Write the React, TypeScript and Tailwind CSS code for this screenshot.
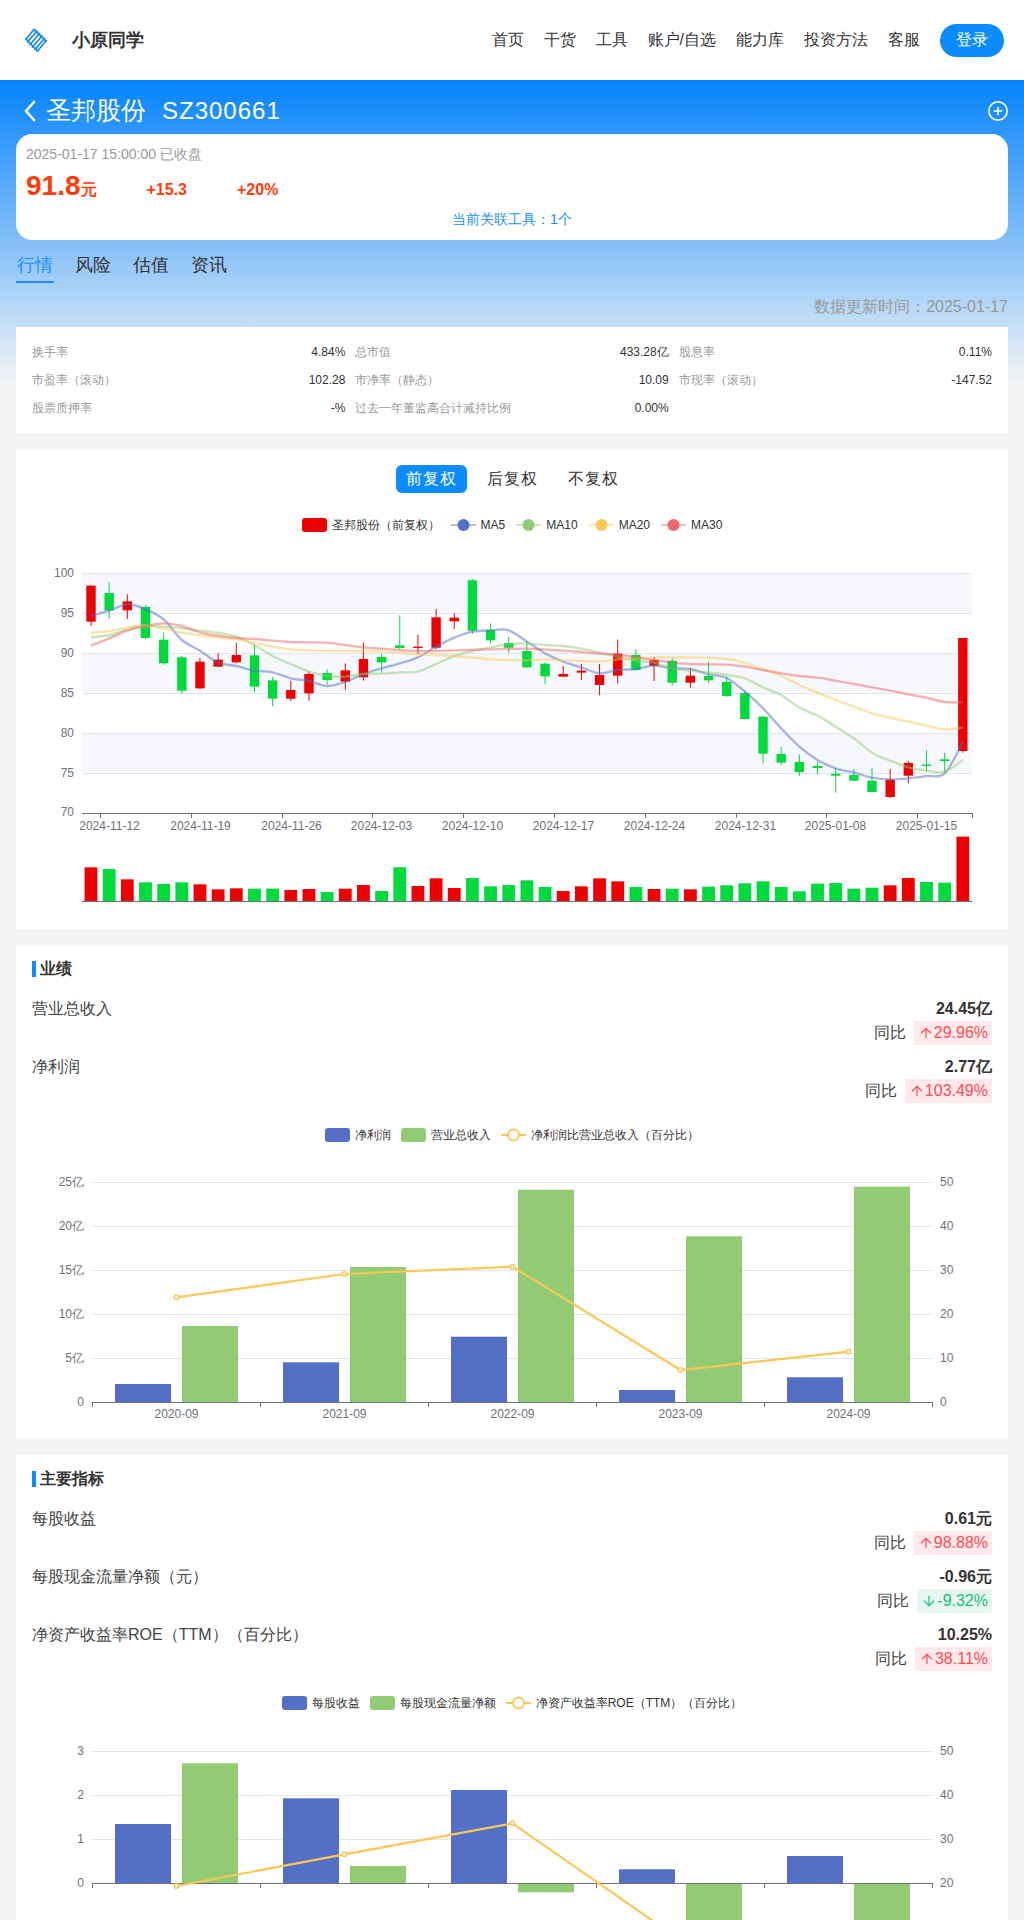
import React from "react";
import { ArrowUp, ArrowDown, CirclePlus } from "lucide-react";

const RED = "#ec0000";
const GREEN = "#00da3c";
const AXIS = "#6e7079";
const GRID = "#e0e6f1";

// [bodyTop, bodyBottom, high, low, isRed, volumeTop]
const K: [number, number, number, number, number, number][] = [
  [107, 215, 105, 228, 1, 952], [129, 181, 97, 207, 0, 957], [154, 181, 133, 207, 1, 988], [171, 264, 165, 268, 0, 997],
  [269, 340, 248, 344, 0, 1002], [322, 422, 317, 431, 0, 997], [335, 415, 324, 417, 1, 1003], [329, 350, 310, 350, 1, 1018],
  [315, 337, 278, 340, 1, 1015], [316, 410, 285, 426, 0, 1016], [391, 446, 381, 468, 0, 1016], [420, 446, 393, 453, 1, 1020],
  [372, 430, 364, 452, 1, 1017], [369, 390, 358, 403, 0, 1026], [361, 395, 340, 419, 1, 1016], [327, 382, 278, 392, 1, 1005],
  [321, 337, 312, 368, 0, 1023], [286, 294, 196, 297, 0, 952], [290, 294, 254, 313, 1, 1008], [202, 293, 177, 298, 1, 985],
  [203, 214, 189, 237, 1, 1014], [91, 242, 87, 251, 0, 984], [240, 271, 220, 280, 0, 1009], [279, 293, 261, 309, 0, 1005],
  [303, 352, 273, 353, 0, 991], [341, 379, 337, 402, 0, 1011], [372, 380, 348, 381, 1, 1023], [362, 368, 342, 390, 1, 1009],
  [375, 405, 342, 436, 1, 985], [311, 377, 268, 400, 1, 994], [315, 360, 297, 362, 0, 1011], [330, 347, 321, 393, 1, 1017],
  [332, 398, 324, 407, 0, 1016], [377, 398, 354, 413, 1, 1018], [378, 391, 335, 399, 0, 1010], [396, 438, 381, 441, 0, 1006],
  [429, 507, 423, 509, 0, 1000], [500, 611, 497, 640, 0, 994], [612, 638, 591, 645, 0, 1011], [636, 666, 613, 678, 0, 1024],
  [648, 654, 636, 673, 0, 1001], [671, 677, 654, 728, 0, 999], [675, 692, 657, 693, 0, 1016], [692, 726, 654, 728, 0, 1013],
  [689, 741, 657, 744, 1, 1006], [639, 677, 633, 701, 1, 984], [644, 648, 601, 665, 0, 996], [628, 633, 609, 668, 0, 998],
  [264, 603, 264, 608, 1, 860],
];

const MA5 = [198, 182, 163, 178, 208, 270, 302, 338, 348, 362, 367, 385, 393, 408, 396, 372, 355, 340, 322, 290, 263, 245, 241, 241, 275, 310, 335, 352, 370, 360, 357, 347, 355, 357, 373, 384, 425, 475, 535, 590, 630, 655, 668, 683, 688, 685, 678, 670, 577];
const MA10 = [262, 255, 238, 228, 230, 235, 242, 248, 260, 285, 318, 342, 365, 378, 380, 372, 371, 367, 365, 342, 318, 303, 292, 282, 281, 285, 288, 296, 308, 320, 332, 338, 355, 362, 367, 375, 385, 412, 435, 473, 497, 530, 565, 608, 632, 652, 662, 665, 630];
const MA20 = [248, 243, 232, 226, 235, 248, 256, 262, 268, 278, 290, 298, 301, 303, 303, 303, 305, 308, 313, 315, 318, 323, 328, 330, 331, 328, 331, 333, 335, 328, 325, 322, 322, 322, 323, 327, 338, 358, 378, 405, 428, 450, 470, 490, 503, 515, 527, 538, 533];
const MA30 = [287, 265, 242, 228, 220, 228, 247, 257, 264, 267, 272, 276, 277, 278, 285, 292, 296, 300, 303, 303, 301, 300, 298, 297, 296, 299, 302, 306, 311, 314, 322, 330, 338, 342, 343, 344, 350, 360, 370, 378, 383, 392, 402, 412, 422, 433, 443, 456, 457];

const cx = (i: number) => 91 + 18.163 * i;
const zy = (z: number) => 550 + z / 3;

function smooth(pts: [number, number][]) {
  let d = `M${pts[0][0]} ${pts[0][1]}`;
  for (let i = 0; i < pts.length - 1; i++) {
    const p0 = pts[Math.max(i - 1, 0)];
    const p1 = pts[i];
    const p2 = pts[i + 1];
    const p3 = pts[Math.min(i + 2, pts.length - 1)];
    d += ` C${p1[0] + (p2[0] - p0[0]) / 6} ${p1[1] + (p2[1] - p0[1]) / 6} ${p2[0] - (p3[0] - p1[0]) / 6} ${p2[1] - (p3[1] - p1[1]) / 6} ${p2[0]} ${p2[1]}`;
  }
  return d;
}

function KChart() {
  const ys = [573.5, 613.5, 653.5, 693.5, 733.5, 773.5];
  const labels = ["100", "95", "90", "85", "80", "75"];
  const dates = ["2024-11-12", "2024-11-19", "2024-11-26", "2024-12-03", "2024-12-10", "2024-12-17", "2024-12-24", "2024-12-31", "2025-01-08", "2025-01-15"];
  const ticks = [100.5, 191.5, 282.5, 372.5, 463.5, 554.5, 645.5, 736.5, 826.5, 917.5, 972.5];
  return (
    <svg width="992" height="389" viewBox="16 540 992 389" fontSize="12">
      {[573.5, 653.5, 733.5].map((y) => (
        <rect key={y} x="82" y={y} width="890" height="40" fill="#f6f8fc" />
      ))}
      {ys.map((y, i) => (
        <g key={y}>
          <line x1="82" x2="972" y1={y} y2={y} stroke={GRID} />
          <text x="74" y={y} textAnchor="end" dominantBaseline="middle" fill={AXIS}>{labels[i]}</text>
        </g>
      ))}
      <text x="74" y="813" textAnchor="end" dominantBaseline="middle" fill={AXIS}>70</text>
      <line x1="82" x2="972.5" y1="813.5" y2="813.5" stroke={AXIS} />
      {ticks.map((x) => (
        <line key={x} x1={x} x2={x} y1="813" y2="818" stroke={AXIS} />
      ))}
      {dates.map((d, i) => (
        <text key={d} x={ticks[i] + 9} y="827" textAnchor="middle" dominantBaseline="middle" fill={AXIS}>{d}</text>
      ))}
      {K.map((k, i) => {
        const c = k[4] ? RED : GREEN;
        const x = cx(i);
        return (
          <g key={i}>
            <line x1={x} x2={x} y1={zy(k[2])} y2={zy(k[3])} stroke={c} />
            <rect x={x - 4.7} y={zy(k[0])} width="9.4" height={(k[1] - k[0]) / 3} fill={c} />
            <rect x={x - 6.4} y={zy(k[5])} width="12.8" height={901 - zy(k[5])} fill={c} />
          </g>
        );
      })}
      {[[MA5, "#5470c6"], [MA10, "#91cc75"], [MA20, "#fac858"], [MA30, "#ee6666"]].map(([arr, color]) => (
        <path
          key={color as string}
          d={smooth((arr as number[]).map((z, i) => [cx(i), zy(z)] as [number, number]))}
          fill="none"
          stroke={color as string}
          strokeWidth="2.4"
          opacity="0.5"
        />
      ))}
      <line x1="82" x2="972.5" y1="901.5" y2="901.5" stroke={AXIS} />
    </svg>
  );
}

type BarChartProps = {
  vb: string;
  h: number;
  zero: number;
  top: number;
  left: string[];
  right: string[];
  blue: number[];
  green: number[];
  line: number[];
  cats?: string[];
};

function BarChart({ vb, h, zero, top, left, right, blue, green, line, cats }: BarChartProps) {
  const step = (zero - top) / (left.length - 1);
  const x0 = 92.5;
  const band = 168;
  return (
    <svg width="992" height={h} viewBox={vb} fontSize="12">
      {left.map((l, i) => {
        const y = Math.floor(zero - step * i) + 0.5;
        return (
          <g key={i}>
            {i > 0 && <line x1={x0} x2={x0 + band * 5} y1={y} y2={y} stroke={GRID} />}
            <text x="84" y={y} textAnchor="end" dominantBaseline="middle" fill={AXIS}>{l}</text>
            <text x="940" y={y} dominantBaseline="middle" fill={AXIS}>{right[i]}</text>
          </g>
        );
      })}
      {blue.map((y, i) => {
        const a = x0 + band * i + 22.5;
        return (
          <g key={i}>
            <rect x={a} y={Math.min(y, zero)} width="56" height={Math.abs(zero - y)} fill="#5470c6" />
            <rect x={a + 67} y={Math.min(green[i], zero)} width="56" height={Math.abs(zero - green[i])} fill="#91cc75" />
          </g>
        );
      })}
      <line x1={x0} x2={x0 + band * 5} y1={zero + 0.5} y2={zero + 0.5} stroke={AXIS} />
      {[0, 1, 2, 3, 4, 5].map((i) => (
        <line key={i} x1={x0 + band * i} x2={x0 + band * i} y1={zero} y2={zero + 5} stroke={AXIS} />
      ))}
      {cats?.map((c, i) => (
        <text key={c} x={x0 + band * i + 84} y={zero + 13} textAnchor="middle" dominantBaseline="middle" fill={AXIS}>{c}</text>
      ))}
      <polyline
        points={line.map((y, i) => `${x0 + band * i + 84},${y}`).join(" ")}
        fill="none"
        stroke="#fac858"
        strokeWidth="2.2"
      />
      {line.map((y, i) => (
        <circle key={i} cx={x0 + band * i + 84} cy={y} r="2.2" fill="#fff" stroke="#fac858" strokeWidth="1.5" />
      ))}
    </svg>
  );
}

type LegendItem = { label: string; kind: "rect" | "dot" | "ring"; color: string };

function Legend({ items, wide }: { items: LegendItem[]; wide?: boolean }) {
  return (
    <div className={wide ? "flex items-center justify-center gap-[11px] text-[12px] leading-[14px] text-[#333]" : "flex items-center justify-center gap-[10px] text-[12px] leading-[14px] text-[#333]"}>
      {items.map((it) => (
        <div key={it.label} className="flex items-center gap-[5px]">
          {it.kind === "rect" ? (
            <span className="block h-[14px] w-[25px] rounded-[3px]" style={{ background: it.color }} />
          ) : (
            <svg width="25" height="14" viewBox="0 0 25 14">
              <line x1="0" x2="25" y1="7" y2="7" stroke={it.color} strokeWidth="2" opacity={it.kind === "dot" ? 0.45 : 1} />
              {it.kind === "dot" ? (
                <circle cx="12.5" cy="7" r="6" fill={it.color} />
              ) : (
                <circle cx="12.5" cy="7" r="5.5" fill="#fff" stroke={it.color} strokeWidth="2" />
              )}
            </svg>
          )}
          <span>{it.label}</span>
        </div>
      ))}
    </div>
  );
}

function SectionTitle({ children }: { children: React.ReactNode }) {
  return (
    <div className="mb-5 flex h-4 items-center gap-1 text-[16px] font-bold text-[#333]">
      <span className="block h-4 w-1 bg-[#0a8cff]" />
      {children}
    </div>
  );
}

function Row({ label, value, pct, up }: { label: string; value: string; pct: string; up: boolean }) {
  return (
    <div className="mb-[10px] flex justify-between text-[16px] leading-6 text-[#444]">
      <div>{label}</div>
      <div className="flex flex-col items-end">
        <div className="font-bold text-[#333]">{value}</div>
        <div className="flex items-center gap-2">
          <span>同比</span>
          <span className={up ? "flex h-6 items-center bg-[#ffe9ea] px-1 text-[#ff4d57]" : "flex h-6 items-center bg-[#e6f7ef] px-1 text-[#17bf78]"}>
            {up ? <ArrowUp size={16} strokeWidth={1.8} /> : <ArrowDown size={16} strokeWidth={1.8} />}
            {pct}
          </span>
        </div>
      </div>
    </div>
  );
}

function Metric({ label, value }: { label: string; value: string }) {
  return (
    <div className="flex h-7 items-center justify-between text-[12px]">
      <span className="text-[#999]">{label}</span>
      <span className="text-[#333]">{value}</span>
    </div>
  );
}

function Logo() {
  return (
    <svg width="24" height="26" viewBox="0 0 24 26" fill="none" stroke="#1a8cf0" strokeWidth="1.8" strokeLinecap="round">
      <path d="M2 12 L10 2.5" />
      <path d="M3.5 15 L13 4" />
      <path d="M6 17.5 L15.5 6.5" />
      <path d="M8.5 20 L18 9" />
      <path d="M11 22.5 L20.5 11.5" />
      <path d="M13.5 24 L22 14" />
      <path d="M2 12 L13.5 24" />
      <path d="M10 2.5 L22 14" />
    </svg>
  );
}

export default function App() {
  return (
    <div className="h-[1920px] w-[1024px] overflow-hidden bg-[#f5f5f5] font-['Liberation_Sans',sans-serif]">
      <header className="flex h-20 items-center justify-between bg-white pl-6 pr-5">
        <div className="flex items-center gap-6">
          <Logo />
          <span className="text-[18px] font-bold text-[#333]">小原同学</span>
        </div>
        <nav className="flex items-center gap-5 text-[16px] text-[#333]">
          <span>首页</span>
          <span>干货</span>
          <span>工具</span>
          <span>账户/自选</span>
          <span>能力库</span>
          <span>投资方法</span>
          <span>客服</span>
          <span className="flex h-[33px] w-16 items-center justify-center rounded-full bg-[#0a8cff] text-white">登录</span>
        </nav>
      </header>

      <main className="bg-[linear-gradient(180deg,#0583fc_0,#f5f5f5_306px)] bg-no-repeat px-4 pb-10">
        <div className="flex h-[54px] items-center justify-between pt-[7px] text-white">
          <div className="flex items-center">
            <svg width="30" height="24" viewBox="0 0 30 24" fill="none" stroke="#fff" strokeWidth="2.6" strokeLinecap="round" strokeLinejoin="round">
              <path d="M18 3 L10 12 L18 21" />
            </svg>
            <span className="text-[25px]">圣邦股份</span>
            <span className="ml-4 text-[24px] tracking-[1px]">SZ300661</span>
          </div>
          <CirclePlus size={22} strokeWidth={1.8} className="-mr-[1px]" />
        </div>

        <section className="h-[106px] rounded-2xl bg-white px-[10px] pt-[10px]">
          <div className="text-[14px] leading-5 text-[#999]">2025-01-17 15:00:00 已收盘</div>
          <div className="mt-[5px] flex h-[34px] items-end font-bold text-[#ff3c0a]">
            <span className="text-[28px] leading-[34px]">91.8</span>
            <span className="text-[16px] leading-[26px]">元</span>
            <span className="ml-[50px] text-[16px] leading-[26px]">+15.3</span>
            <span className="ml-[50px] text-[16px] leading-[26px]">+20%</span>
          </div>
          <div className="mt-[6px] text-center text-[14px] leading-5 text-[#1890ff]">当前关联工具：1个</div>
        </section>

        <div className="mt-[14px] flex h-[29px] gap-5 text-[18px] leading-[22px] text-[#333]">
          <span className="h-[29px] w-[38px] border-b-2 border-[#1890ff] text-center text-[#1890ff]">行情</span>
          <span className="w-[38px] text-center">风险</span>
          <span className="w-[38px] text-center">估值</span>
          <span className="w-[38px] text-center">资讯</span>
        </div>

        <div className="mb-2 mt-3 text-right text-[16px] leading-6 text-[#999]">数据更新时间：2025-01-17</div>

        <section className="h-[106px] bg-white px-4 pt-[11px]">
          <div className="grid grid-cols-3 gap-x-[10px]">
            <Metric label="换手率" value="4.84%" />
            <Metric label="总市值" value="433.28亿" />
            <Metric label="股息率" value="0.11%" />
            <Metric label="市盈率（滚动）" value="102.28" />
            <Metric label="市净率（静态）" value="10.09" />
            <Metric label="市现率（滚动）" value="-147.52" />
            <Metric label="股票质押率" value="-%" />
            <Metric label="过去一年董监高合计减持比例" value="0.00%" />
          </div>
        </section>

        <section className="mt-4 h-[480px] bg-white pt-4">
          <div className="flex h-7 justify-center gap-[10px] text-[16px] leading-7 tracking-[1px] text-[#333]">
            <span className="w-[71px] rounded-md bg-[#0a8cff] text-center text-white">前复权</span>
            <span className="w-[71px] text-center">后复权</span>
            <span className="w-[71px] text-center">不复权</span>
          </div>
          <div className="mb-2 mt-[25px]">
            <Legend
              wide
              items={[
                { label: "圣邦股份（前复权）", kind: "rect", color: RED },
                { label: "MA5", kind: "dot", color: "#5470c6" },
                { label: "MA10", kind: "dot", color: "#91cc75" },
                { label: "MA20", kind: "dot", color: "#fac858" },
                { label: "MA30", kind: "dot", color: "#ee6666" },
              ]}
            />
          </div>
          <KChart />
        </section>

        <section className="mt-4 h-[494px] bg-white pt-4">
          <div className="px-4">
            <SectionTitle>业绩</SectionTitle>
            <Row label="营业总收入" value="24.45亿" pct="29.96%" up />
            <Row label="净利润" value="2.77亿" pct="103.49%" up />
          </div>
          <div className="mb-[7px] mt-[25px]">
            <Legend
              items={[
                { label: "净利润", kind: "rect", color: "#5470c6" },
                { label: "营业总收入", kind: "rect", color: "#91cc75" },
                { label: "净利润比营业总收入（百分比）", kind: "ring", color: "#fac858" },
              ]}
            />
          </div>
          <BarChart
            vb="16 1150 992 289"
            h={289}
            zero={1403}
            top={1183}
            left={["0", "5亿", "10亿", "15亿", "20亿", "25亿"]}
            right={["0", "10", "20", "30", "40", "50"]}
            blue={[1385, 1363.3, 1337.7, 1391, 1378.3]}
            green={[1327, 1268, 1190.7, 1237.3, 1187.7]}
            line={[1298.3, 1275, 1267.7, 1371, 1352.7]}
            cats={["2020-09", "2021-09", "2022-09", "2023-09", "2024-09"]}
          />
        </section>

        <section className="mt-4 bg-white pt-4">
          <div className="px-4">
            <SectionTitle>主要指标</SectionTitle>
            <Row label="每股收益" value="0.61元" pct="98.88%" up />
            <Row label="每股现金流量净额（元）" value="-0.96元" pct="-9.32%" up={false} />
            <Row label="净资产收益率ROE（TTM）（百分比）" value="10.25%" pct="38.11%" up />
          </div>
          <div className="mb-[7px] mt-[25px]">
            <Legend
              items={[
                { label: "每股收益", kind: "rect", color: "#5470c6" },
                { label: "每股现金流量净额", kind: "rect", color: "#91cc75" },
                { label: "净资产收益率ROE（TTM）（百分比）", kind: "ring", color: "#fac858" },
              ]}
            />
          </div>
          <BarChart
            vb="16 1717 992 289"
            h={289}
            zero={1883}
            top={1751}
            left={["0", "1", "2", "3"]}
            right={["20", "30", "40", "50"]}
            blue={[1824, 1798.3, 1790, 1869.3, 1856]}
            green={[1763.3, 1866, 1892.3, 1975, 1975]}
            line={[1886, 1854.3, 1823.3, 1940, 1990]}
          />
        </section>
      </main>
    </div>
  );
}
